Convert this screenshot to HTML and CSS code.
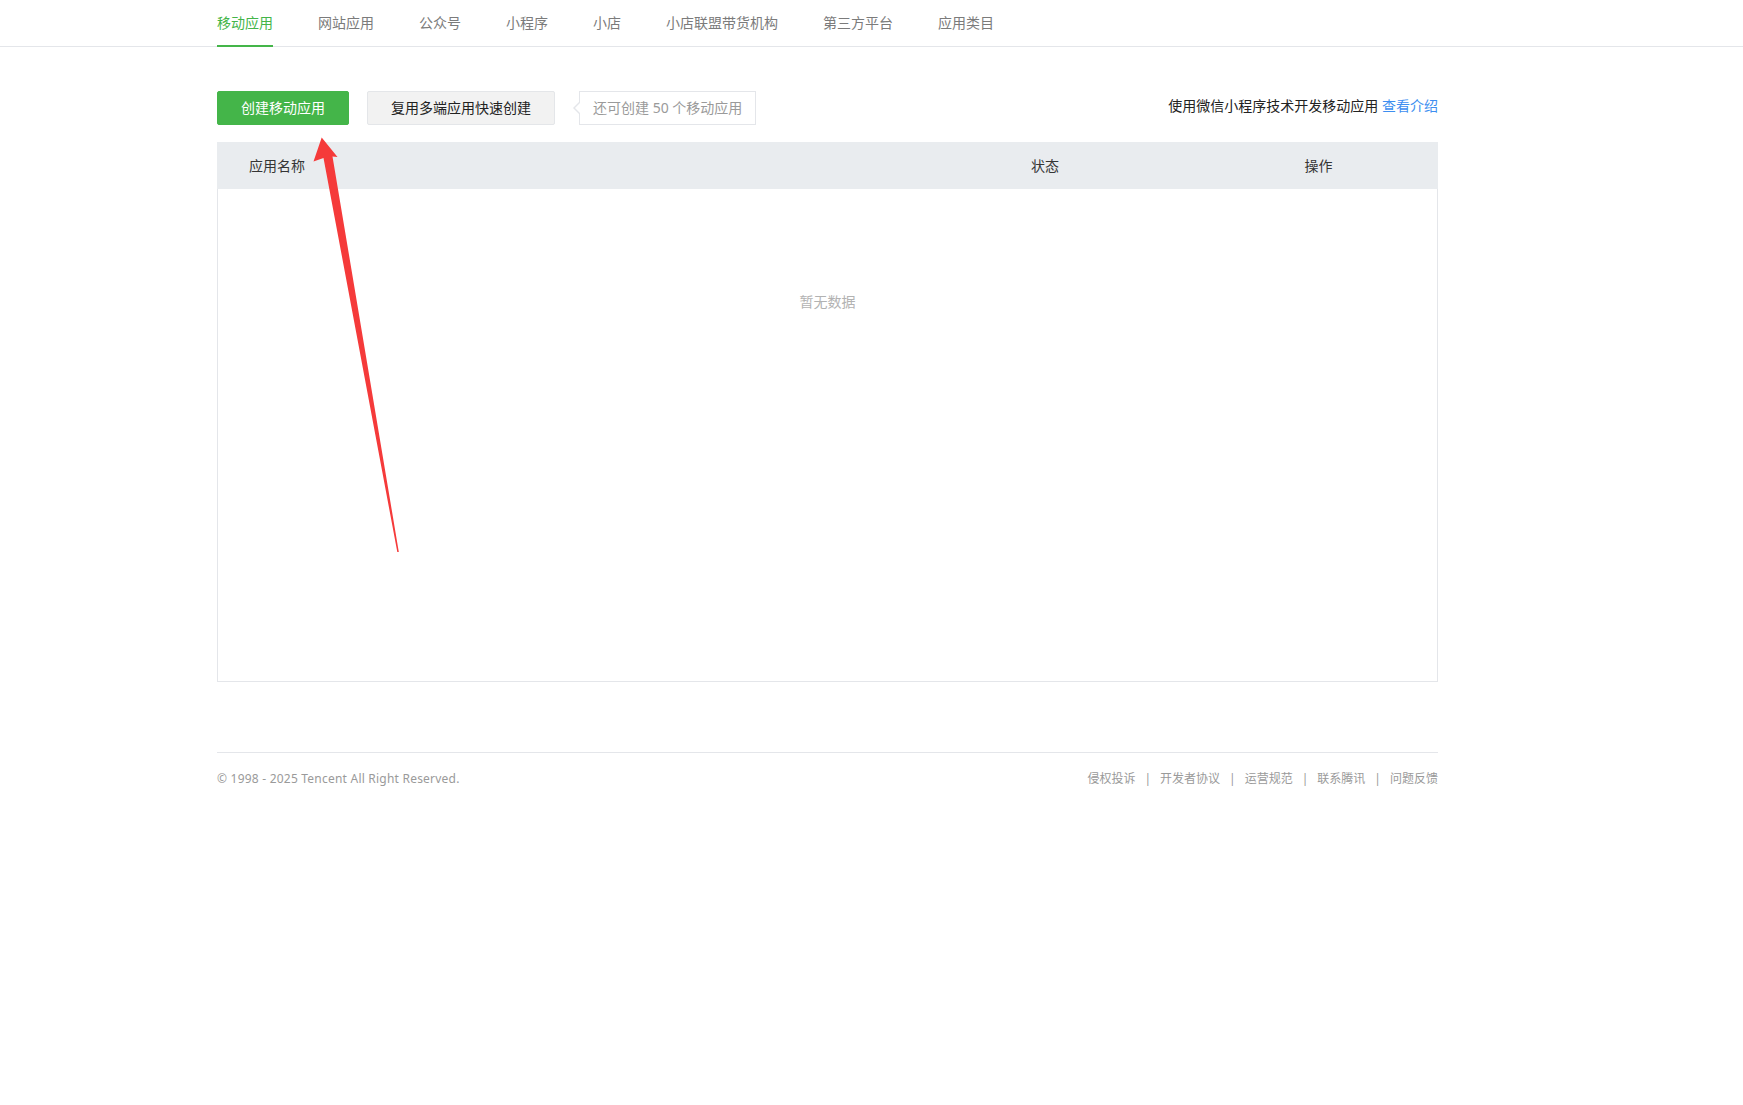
FILE: index.html
```html
<!DOCTYPE html>
<html lang="zh-CN">
<head>
<meta charset="utf-8">
<title>移动应用</title>
<link rel="stylesheet" href="styles.css">
</head>
<body>
<nav class="tabs">
  <a class="tab active">移动应用</a>
  <a class="tab">网站应用</a>
  <a class="tab">公众号</a>
  <a class="tab">小程序</a>
  <a class="tab">小店</a>
  <a class="tab">小店联盟带货机构</a>
  <a class="tab">第三方平台</a>
  <a class="tab">应用类目</a>
</nav>

<main class="content">
  <div class="toolbar">
    <div class="actions">
      <button class="btn btn-primary">创建移动应用</button>
      <button class="btn btn-default">复用多端应用快速创建</button>
      <span class="quota">还可创建 50 个移动应用</span>
    </div>
    <div class="intro">使用微信小程序技术开发移动应用 <a class="link">查看介绍</a></div>
  </div>

  <div class="table">
    <div class="thead">
      <div class="th th-name">应用名称</div>
      <div class="th th-center">状态</div>
      <div class="th th-center">操作</div>
    </div>
    <div class="tbody">
      <div class="empty">暂无数据</div>
    </div>
  </div>
</main>

<footer class="footer">
  <div class="copyright">© 1998 - 2025 Tencent All Right Reserved.</div>
  <div class="footer-links">
    <a>侵权投诉</a><span class="sep">|</span>
    <a>开发者协议</a><span class="sep">|</span>
    <a>运营规范</a><span class="sep">|</span>
    <a>联系腾讯</a><span class="sep">|</span>
    <a>问题反馈</a>
  </div>
</footer>

<svg class="annotation" width="1743" height="1105" viewBox="0 0 1743 1105">
  <polygon points="321.7,137.5 313.5,161.5 323.5,158 397.3,552 398.8,552 332.5,156.5 337.5,157" fill="#f53a3a"/>
</svg>
</body>
</html>
```

FILE: styles.css
```css
* { box-sizing: border-box; }

html, body {
  margin: 0;
  padding: 0;
  background: #fff;
}

body {
  font-family: "Noto Sans", "Noto Sans CJK SC", sans-serif;
  font-size: 14px;
  color: #353535;
  position: relative;
  min-height: 1105px;
}

a { text-decoration: none; cursor: pointer; }

/* Tabs */
.tabs {
  display: flex;
  height: 47px;
  padding-left: 217px;
  border-bottom: 1px solid #e4e6ea;
}

.tab {
  height: 47px;
  line-height: 46px;
  margin-right: 45px;
  color: #7b7b7b;
  font-size: 14px;
  margin-bottom: -1px;
  border-bottom: 2px solid transparent;
  white-space: nowrap;
}

.tab.active {
  color: #44b549;
  border-bottom-color: #44b549;
}

/* Content */
.content {
  margin-left: 217px;
  width: 1221px;
  padding-top: 44px;
}

.toolbar {
  display: flex;
  justify-content: space-between;
  align-items: center;
  height: 34px;
}

.actions {
  display: flex;
  align-items: center;
}

.btn {
  height: 34px;
  line-height: 32px;
  font-family: inherit;
  font-size: 14px;
  border-radius: 2px;
  cursor: pointer;
  white-space: nowrap;
}

.btn-primary {
  background: #44b549;
  color: #fff;
  border: 1px solid #44b549;
  padding: 0 23px;
  margin-right: 18px;
}

.btn-default {
  background: #f2f2f2;
  color: #222;
  border: 1px solid #e4e6e9;
  padding: 0 23px;
  margin-right: 24px;
}

.quota {
  position: relative;
  height: 34px;
  line-height: 32px;
  padding: 0 13px;
  border: 1px solid #e4e6ea;
  background: #fff;
  color: #9a9a9a;
  white-space: nowrap;
}

.quota::before,
.quota::after {
  content: "";
  position: absolute;
  top: 50%;
  width: 0;
  height: 0;
  border-style: solid;
  border-width: 6px 6px 6px 0;
  transform: translateY(-50%);
}

.quota::before {
  left: -7px;
  border-color: transparent #e4e6ea transparent transparent;
}

.quota::after {
  left: -5px;
  border-color: transparent #fff transparent transparent;
}

.intro {
  color: #222;
  font-size: 14px;
  line-height: 20px;
  margin-bottom: 4px;
  white-space: nowrap;
}

.link {
  color: #3d8ef0;
}

/* Table */
.table {
  margin-top: 17px;
  border: 1px solid #e4e6ea;
  border-top: 0;
}

.thead {
  display: grid;
  grid-template-columns: 672px 310px 237px;
  height: 47px;
  background: #e9ecef;
  margin: 0 -1px;
  padding: 0 1px;
}

.th {
  line-height: 47px;
  color: #353535;
  font-size: 14px;
}

.th-name { padding-left: 31px; }
.th-center { text-align: center; }

.tbody {
  height: 492px;
  padding-top: 101px;
}

.empty {
  text-align: center;
  color: #b2b2b2;
  line-height: 24px;
  font-size: 14px;
}

/* Footer */
.footer {
  margin: 70px 0 0 217px;
  width: 1221px;
  border-top: 1px solid #e4e6ea;
  display: flex;
  justify-content: space-between;
  align-items: center;
  padding-top: 16px;
  font-size: 12px;
  line-height: 20px;
  color: #9a9a9a;
}

.copyright {
  letter-spacing: 0.22px;
}

.footer-links {
  display: flex;
  align-items: center;
}

.footer-links a {
  color: #9a9a9a;
}

.sep {
  margin: 0 9px;
  color: #9a9a9a;
}

/* Annotation overlay */
.annotation {
  position: absolute;
  left: 0;
  top: 0;
  pointer-events: none;
}
```
